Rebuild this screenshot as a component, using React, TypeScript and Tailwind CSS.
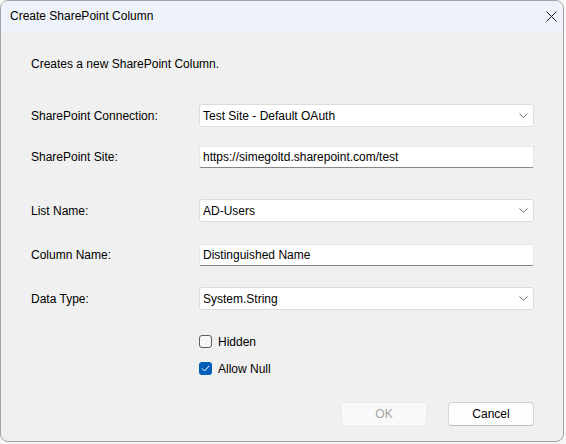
const font = { fontFamily: '"Liberation Sans", Arial, sans-serif' };

function Chevron() {
  return (
    <svg width="9" height="5" viewBox="0 0 9 5" className="shrink-0">
      <path d="M0.5 0.5 L4.5 4.5 L8.5 0.5" fill="none" stroke="#6b6b6b" strokeWidth="1" />
    </svg>
  );
}

function Combo({ value }: { value: string }) {
  return (
    <div className="flex h-[23px] w-[335px] items-center justify-between rounded-[3px] border border-[#dcdcdc] bg-white pl-[3px] pr-[5px]">
      <span>{value}</span>
      <Chevron />
    </div>
  );
}

function TextBox({ value }: { value: string }) {
  return (
    <div className="flex h-[22px] w-[335px] items-center rounded-[2px] border border-[#e6e6e6] border-b-[#868686] bg-white pl-[3px]">
      <span>{value}</span>
    </div>
  );
}

function Row({ label, children, className }: { label: string; children: React.ReactNode; className?: string }) {
  return (
    <div className={`flex items-center ${className ?? ""}`}>
      <div className="w-[168px]">{label}</div>
      {children}
    </div>
  );
}

function Check({ checked, label, className }: { checked?: boolean; label: string; className?: string }) {
  return (
    <div className={`ml-[168px] flex h-[13px] items-center gap-[6px] ${className ?? ""}`}>
      {checked ? (
        <div className="flex h-[13px] w-[13px] items-center justify-center rounded-[3px] bg-[#005fb8]">
          <svg width="9" height="7" viewBox="0 0 9 7">
            <path d="M1 3.5 L3.5 6 L8 1" fill="none" stroke="white" strokeWidth="1" />
          </svg>
        </div>
      ) : (
        <div className="h-[13px] w-[13px] rounded-[3px] border border-[#5f5f5f] bg-[#f7f7f7]" />
      )}
      <span>{label}</span>
    </div>
  );
}

export default function App() {
  return (
    <div className="h-[444px] w-[566px] bg-[#f7f7f7] text-[12px] text-black" style={font}>
      <div className="flex h-[442px] w-[564px] flex-col overflow-hidden rounded-[8px] border border-[#a3a3a3] bg-[#f0f0f0]">
        {/* title bar */}
        <div className="flex h-[30px] shrink-0 items-center justify-between bg-[#eef2fa] pl-[9px] pr-[6px]">
          <span>Create SharePoint Column</span>
          <svg width="11" height="11" viewBox="0 0 11 11">
            <path d="M0.5 0.5 L10.5 10.5 M10.5 0.5 L0.5 10.5" stroke="#1a1a1a" strokeWidth="1" />
          </svg>
        </div>

        <div className="flex flex-col pl-[30px]">
          <div className="mt-[25px] leading-[16px]">Creates a new SharePoint Column.</div>

          <Row label="SharePoint Connection:" className="mt-[32px]">
            <Combo value="Test Site - Default OAuth" />
          </Row>
          <Row label="SharePoint Site:" className="mt-[19px]">
            <TextBox value="https://simegoltd.sharepoint.com/test" />
          </Row>
          <Row label="List Name:" className="mt-[31px]">
            <Combo value="AD-Users" />
          </Row>
          <Row label="Column Name:" className="mt-[22px]">
            <TextBox value="Distinguished Name" />
          </Row>
          <Row label="Data Type:" className="mt-[21px]">
            <Combo value="System.String" />
          </Row>

          <Check label="Hidden" className="mt-[25px]" />
          <Check label="Allow Null" checked className="mt-[14px]" />

          <div className="mt-[27px] flex w-[503px] justify-end gap-[21px]">
            <button className="h-[24px] w-[86px] rounded-[4px] border border-[#ececec] bg-[#f9f9f9] text-[#a3a3a3]">
              OK
            </button>
            <button className="h-[24px] w-[86px] rounded-[4px] border border-[#d4d4d4] border-b-[#b8b8b8] bg-[#fdfdfd]">
              Cancel
            </button>
          </div>
        </div>
      </div>
    </div>
  );
}
